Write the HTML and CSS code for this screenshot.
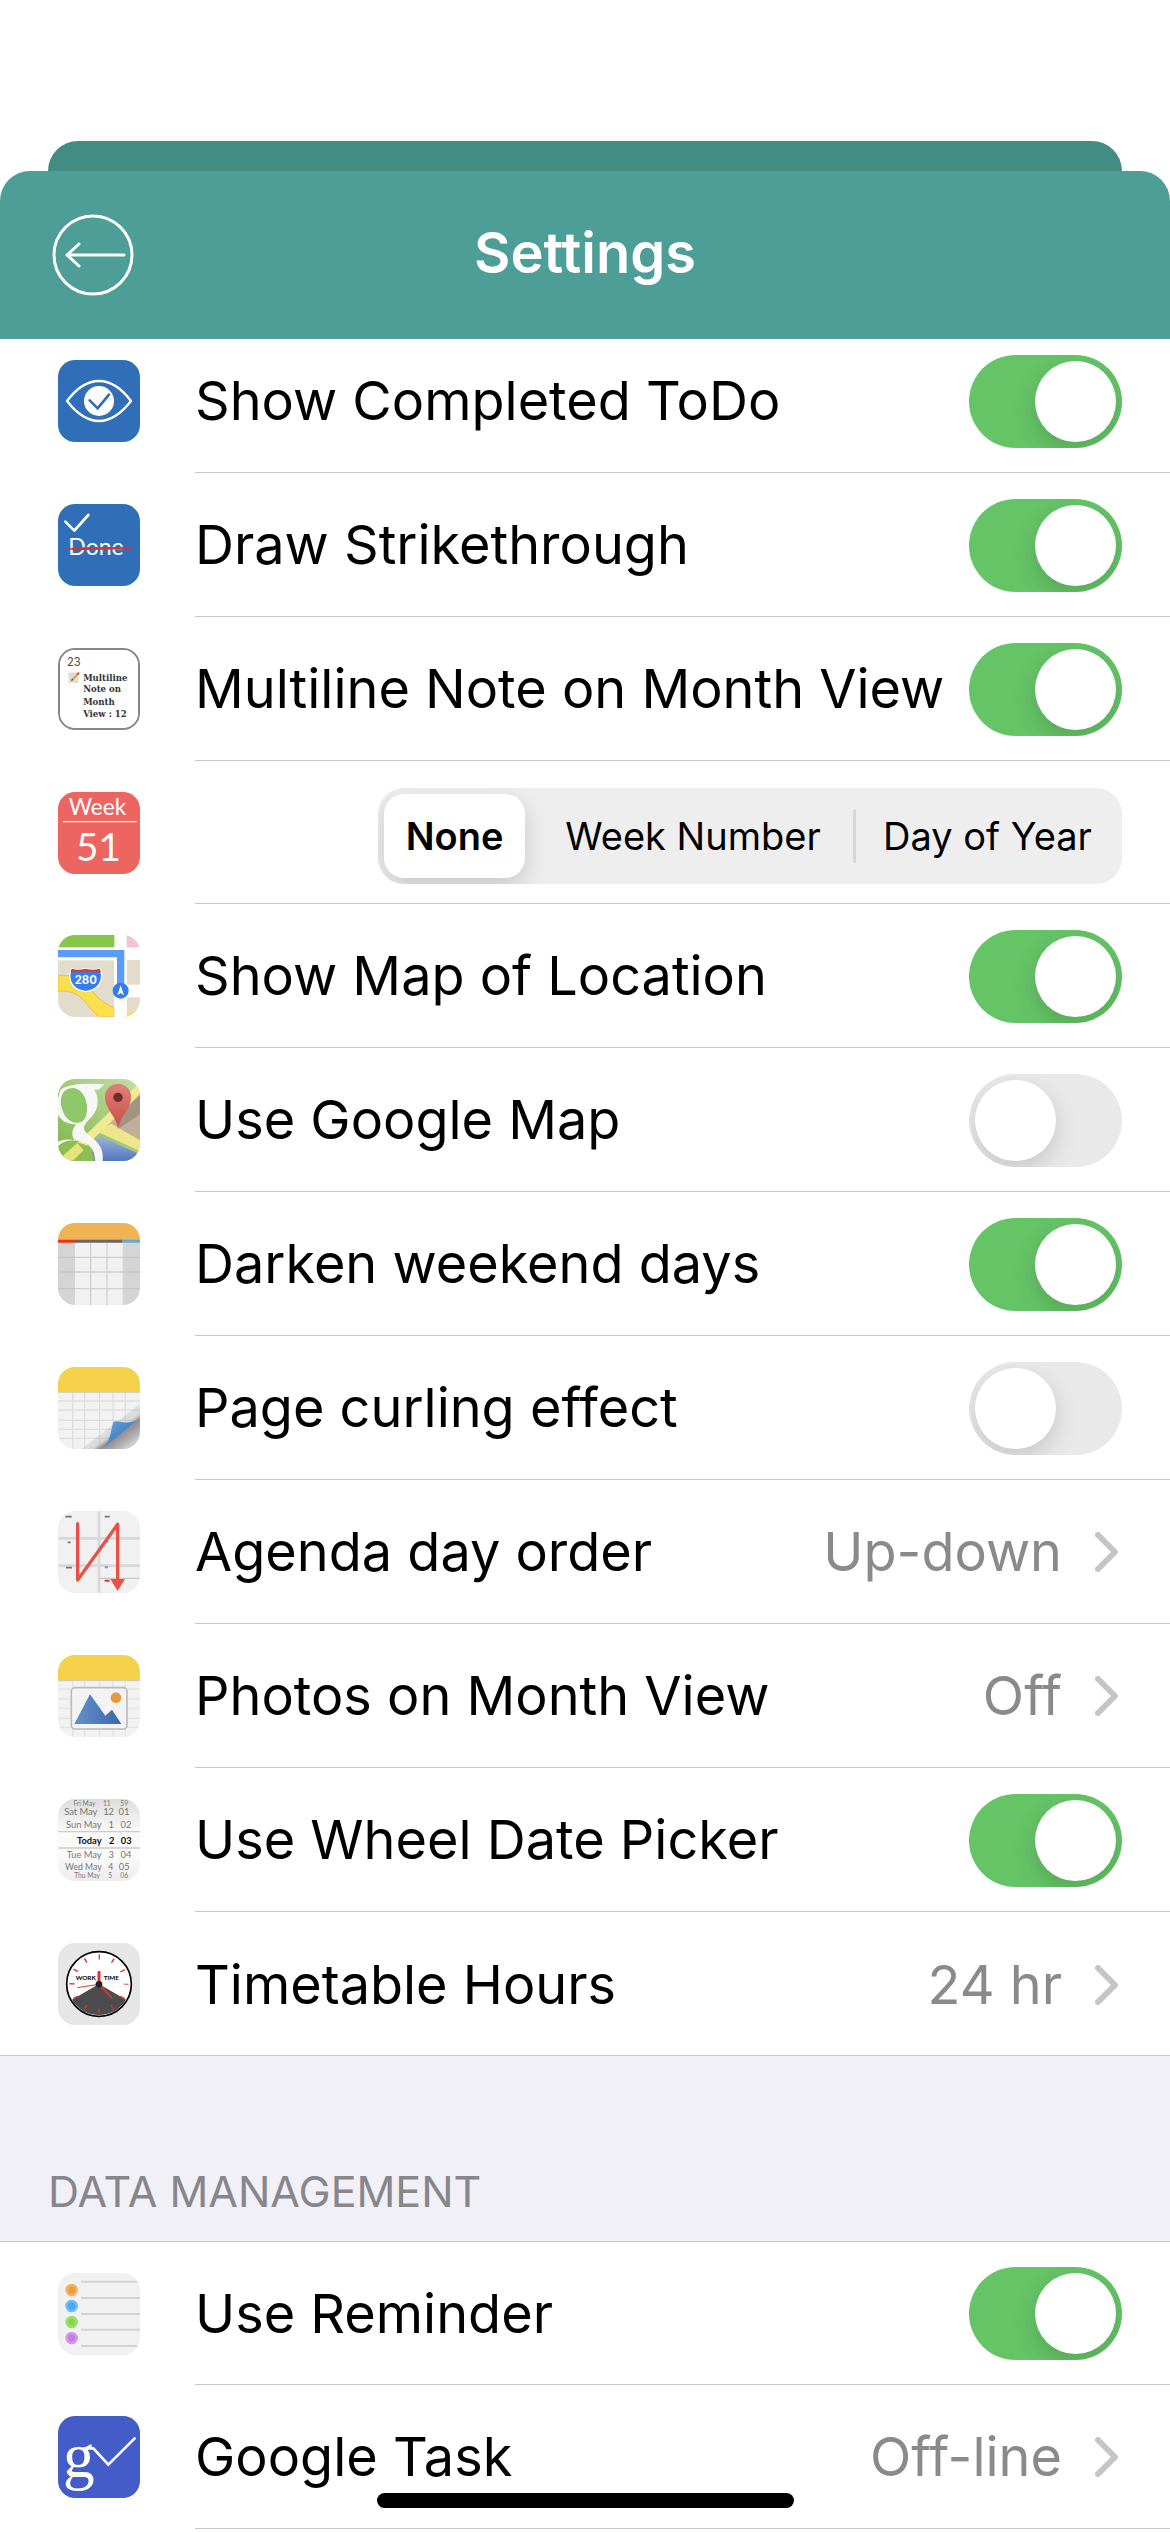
FILE: index.html
```html
<!DOCTYPE html>
<html lang="en">
<head>
<meta charset="utf-8">
<meta name="viewport" content="width=device-width, initial-scale=1">
<title>Settings</title>
<link rel="stylesheet" href="styles.css">
</head>
<body>
<div class="behind"></div>
<main class="sheet">
  <header class="navbar">
    <button class="back" type="button" aria-label="Back">
      <svg viewBox="0 0 82 82" fill="none" stroke="#fff" stroke-width="3" stroke-linecap="round" stroke-linejoin="round"><circle cx="41" cy="41" r="39"/><path d="M72 41H15M27 30L15 41L27 52"/></svg>
    </button>
    <h1 class="title">Settings</h1>
  </header>

  <ul class="list list-first">
    <li class="row">
      <svg class="icon" viewBox="0 0 246 246" aria-hidden="true">
        <rect width="246" height="246" fill="#306fb7"/>
        <path d="M27 123Q72 63 123 63T219 123Q172 183 123 183T27 123Z" fill="none" stroke="#fff" stroke-width="7" stroke-linejoin="round"/>
        <circle cx="123" cy="123" r="45" fill="#fff"/>
        <path d="M95 121L119 145L153 104" fill="none" stroke="#306fb7" stroke-width="8" stroke-linecap="round"/>
      </svg>
      <div class="content"><label class="name" for="completed">Show Completed ToDo</label><input class="switch" type="checkbox" role="switch" id="completed" checked></div>
    </li>
    <li class="row">
      <svg class="icon" viewBox="0 0 246 246" aria-hidden="true">
        <rect width="246" height="246" fill="#306fb7"/>
        <path d="M22 53L49 80L91 33" fill="none" stroke="#fff" stroke-width="8" stroke-linecap="round" stroke-linejoin="round"/>
        <text class="geo" x="31" y="154" font-size="69" fill="#fff">Done</text>
        <path d="M24 134L60 130L150 129L222 130V135L140 137L50 139Z" fill="#d8322f"/>
      </svg>
      <div class="content"><label class="name" for="strike">Draw Strikethrough</label><input class="switch" type="checkbox" role="switch" id="strike" checked></div>
    </li>
    <li class="row">
      <svg class="icon icon-outlined" viewBox="0 0 246 246" aria-hidden="true">
        <rect width="246" height="246" fill="#fff"/>
        <text x="22" y="52" font-size="35" fill="#444">23</text>
        <rect x="27" y="71" width="31" height="33" fill="#ddd"/>
        <path d="M37 95L56 76" stroke="#d9a82b" stroke-width="6"/><path d="M54 78L60 72" stroke="#e05545" stroke-width="7"/><path d="M36 97L40 92" stroke="#444" stroke-width="4"/>
        <g class="slab" font-size="27" fill="#333"><text x="73" y="97">Multiline</text><text x="73" y="133">Note on</text><text x="73" y="173">Month</text><text x="73" y="210">View : 12</text></g>
      </svg>
      <div class="content"><label class="name" for="multiline">Multiline Note on Month View</label><input class="switch" type="checkbox" role="switch" id="multiline" checked></div>
    </li>
    <li class="row row-short">
      <svg class="icon" viewBox="0 0 246 246" aria-hidden="true">
        <rect width="246" height="246" fill="#ed6560"/>
        <g class="geo" fill="#fff"><text x="32" y="68" font-size="68">Week</text><text x="54" y="207" font-size="116">51</text></g>
        <path d="M15 89H236" stroke="#fff" stroke-width="4"/>
      </svg>
      <div class="content content-segmented">
        <fieldset class="segmented" aria-label="Day label">
          <label class="segment segment-none"><input type="radio" name="daylabel" checked><span>None</span></label>
          <label class="segment segment-week"><input type="radio" name="daylabel"><span>Week Number</span></label>
          <label class="segment segment-day"><input type="radio" name="daylabel"><span>Day of Year</span></label>
        </fieldset>
      </div>
    </li>
    <li class="row">
      <svg class="icon" viewBox="0 0 246 246" aria-hidden="true">
        <rect width="246" height="246" fill="#fff"/>
        <rect width="169" height="37" fill="#87c648"/><rect x="206" width="40" height="37" fill="#f2c4d1"/>
        <rect y="76" width="169" height="170" fill="#e1dccb"/><rect x="206" y="75" width="40" height="74" fill="#e1dccb"/><rect x="206" y="187" width="40" height="59" fill="#e1dccb"/>
        <path d="M0 122C40 121 65 124 86 149C110 178 132 205 169 218V246H124C95 221 83 199 62 183C42 169 25 168 0 168Z" fill="#f9e04c" stroke="#edbd49" stroke-width="3"/>
        <path d="M169 76V246H206V76Z" fill="#fff"/>
        <path d="M206 246V236Q225 233 246 225V246Z" fill="#f9e04c"/>
        <path d="M0 56H188V150" fill="none" stroke="#5a9cf8" stroke-width="22"/>
        <path d="M41 101Q60 107 83 101Q106 107 125 101C136 121 135 163 83 170C31 163 30 121 41 101Z" fill="#347df1" stroke="#fff" stroke-width="4"/>
        <path d="M41 101Q60 107 83 101Q106 107 125 101L129 112H37Z" fill="#cc3d3c"/>
        <text class="bold" x="50" y="146" font-size="34" fill="#fff">280</text>
        <circle cx="188" cy="167" r="24" fill="#347df1"/><path d="M188 151L198 181L188 174L178 181Z" fill="#fff"/>
      </svg>
      <div class="content"><label class="name" for="map">Show Map of Location</label><input class="switch" type="checkbox" role="switch" id="map" checked></div>
    </li>
    <li class="row">
      <svg class="icon" viewBox="0 0 246 246" aria-hidden="true">
        <defs>
          <linearGradient id="land" x1="0" y1="1" x2="1" y2="0"><stop offset="0" stop-color="#7fb548"/><stop offset="1" stop-color="#c3dea9"/></linearGradient>
          <linearGradient id="sea" x1="0" y1="0" x2="0" y2="1"><stop offset="0" stop-color="#9db3de"/><stop offset="1" stop-color="#5277bf"/></linearGradient>
          <linearGradient id="pin" x1="0" y1="0" x2="0" y2="1"><stop offset="0" stop-color="#e08178"/><stop offset="1" stop-color="#c74c42"/></linearGradient>
        </defs>
        <rect width="246" height="246" fill="url(#land)"/>
        <path d="M246 38L142 146L246 196Z" fill="#c0ae99"/>
        <path d="M246 48L181 112L181 150L246 106Z" fill="#a29481"/>
        <path d="M121 170L246 226V246H90Z" fill="url(#sea)"/>
        <path d="M20 246L246 28" stroke="#f1ea92" stroke-width="25"/>
        <path d="M118 155L160 134L246 184V216L126 162Z" fill="#eee68b"/>
        <path d="M0 203C29 183 79 184 102 216Q108 229 108 246H43L22 232Z" fill="#8dbd53"/><path d="M43 246L77 214L58 192L10 235Z" fill="#e8e27a"/>
        <path d="M6 34C30 16 66 12 139 16L122 32H108C126 55 122 91 101 113C85 130 75 138 79 153C91 177 141 187 134 246H111C112 203 84 186 46 184C24 184 8 193 0 202V188C17 180 35 180 49 183C37 164 45 149 54 136C34 136 9 127 0 107V60Z" fill="#f7f8f5"/>
        <path d="M45 27C10 28 2 61 14 95C26 130 61 143 80 120C98 92 83 29 45 27Z" fill="#91c76b"/>
        <path d="M180 152C177 111 141 93 141 53A39 39 0 0 1 219 53C219 93 184 111 180 152Z" fill="url(#pin)"/><circle cx="180" cy="55" r="14" fill="#6e2c2b"/>
      </svg>
      <div class="content"><label class="name" for="gmap">Use Google Map</label><input class="switch" type="checkbox" role="switch" id="gmap"></div>
    </li>
    <li class="row">
      <svg class="icon" viewBox="0 0 246 246" aria-hidden="true">
        <rect width="246" height="246" fill="#f1f1f1"/>
        <path d="M0 55H51V246H0ZM194 55H246V246H194Z" fill="#d5d5d5"/>
        <path d="M98 60V246M147 60V246M0 103H246M0 147H246M0 197H246" stroke="#bbb" stroke-opacity=".6" stroke-width="4"/>
        <rect width="246" height="51" fill="#efb254"/>
        <path d="M0 55H51" stroke="#ea3324" stroke-width="9"/><path d="M51 55H194" stroke="#666" stroke-width="9"/><path d="M194 55H246" stroke="#5aabdd" stroke-width="9"/>
      </svg>
      <div class="content"><label class="name" for="darken">Darken weekend days</label><input class="switch" type="checkbox" role="switch" id="darken" checked></div>
    </li>
    <li class="row">
      <svg class="icon" viewBox="0 0 246 246" aria-hidden="true">
        <defs>
          <linearGradient id="shade" gradientUnits="userSpaceOnUse" x1="145" y1="140" x2="215" y2="235"><stop offset="0" stop-color="#888" stop-opacity="0"/><stop offset=".5" stop-color="#888" stop-opacity=".25"/><stop offset=".62" stop-color="#777" stop-opacity=".8"/><stop offset="1" stop-color="#ccc"/></linearGradient>
          <linearGradient id="fold" x1="0" y1="0" x2="1" y2="1"><stop offset="0" stop-color="#72a9db"/><stop offset=".6" stop-color="#3d80c4"/></linearGradient>
        </defs>
        <rect width="246" height="246" fill="#f2f2f2"/>
        <path d="M44 75V246M80 75V246M125 75V246M165 75V246M202 75V246M0 102H246M0 129H246M0 160H246M0 187H246M0 214H246" stroke="#dedede" stroke-width="4"/>
        <path d="M246 110V246H70Z" fill="url(#shade)"/>
        <path d="M136 243C157 224 157 195 166 165Q169 160 195 166Q222 169 243 155Z" fill="url(#fold)"/>
        <rect width="246" height="74" fill="#f6d14a"/><path d="M0 75H246" stroke="#cfc9ae" stroke-width="4"/>
      </svg>
      <div class="content"><label class="name" for="curl">Page curling effect</label><input class="switch" type="checkbox" role="switch" id="curl"></div>
    </li>
    <li>
      <a class="row" href="#agenda">
        <svg class="icon" viewBox="0 0 246 246" aria-hidden="true">
          <rect width="246" height="246" fill="#f1f1f1"/>
          <path d="M123 0V246M0 82H246M0 164H246" stroke="#d8d8d8" stroke-width="8"/><path d="M123 202H246" stroke="#c8c8c8" stroke-width="4"/>
          <path d="M22 17H41M140 17H155M29 94H38M24 170H42M144 92H150" stroke="#777" stroke-width="5"/><path d="M140 169H150" stroke="#58a9d8" stroke-width="6"/><path d="M140 209H155" stroke="#e33" stroke-width="6"/>
          <path d="M59 38V207L179 40V205" fill="none" stroke="#e7514a" stroke-width="10" stroke-linecap="round" stroke-linejoin="round"/><path d="M157 204H201L179 240Z" fill="#e7514a"/>
        </svg>
        <span class="content"><span class="name">Agenda day order</span><span class="value">Up-down</span><svg class="chevron" viewBox="0 0 24 40" aria-hidden="true"><path d="M3 3L20 20L3 37"/></svg></span>
      </a>
    </li>
    <li>
      <a class="row" href="#photos">
        <svg class="icon" viewBox="0 0 246 246" aria-hidden="true">
          <defs><linearGradient id="hill"><stop offset="0" stop-color="#6590c8"/><stop offset="1" stop-color="#3a68ae"/></linearGradient></defs>
          <rect width="246" height="246" fill="#f2f2f2"/>
          <path d="M44 75V246M80 75V246M125 75V246M165 75V246M202 75V246M0 102H246M0 132H246M0 160H246M0 190H246M0 217H246" stroke="#e3e3e3" stroke-width="4"/>
          <rect width="246" height="76" fill="#f6d14a"/><path d="M0 77H246" stroke="#cfc9ae" stroke-width="3"/>
          <rect x="40" y="98" width="167" height="124" rx="11" fill="#f3f3f3" stroke="#bbb" stroke-width="5"/>
          <path d="M49 207L96 118L142 182L162 164L190 207Z" fill="url(#hill)"/><circle cx="174" cy="128" r="16" fill="#e39a45"/>
        </svg>
        <span class="content"><span class="name">Photos on Month View</span><span class="value">Off</span><svg class="chevron" viewBox="0 0 24 40" aria-hidden="true"><path d="M3 3L20 20L3 37"/></svg></span>
      </a>
    </li>
    <li class="row">
      <svg class="icon" viewBox="0 0 246 246" aria-hidden="true">
        <defs><linearGradient id="wheel" x1="0" y1="0" x2="0" y2="1"><stop offset="0" stop-color="#ddd"/><stop offset=".4" stop-color="#fafafa"/><stop offset=".7" stop-color="#fafafa"/><stop offset="1" stop-color="#ececec"/></linearGradient></defs>
        <rect width="246" height="246" fill="url(#wheel)"/>
        <path d="M0 98H246M0 147H246" stroke="#ccc" stroke-width="4"/>
        <g class="geo" font-size="28" fill="#777" text-anchor="end">
          <text font-size="20" x="112" y="21">Fri May</text><text font-size="20" x="158" y="21">11</text><text font-size="20" x="210" y="21">59</text>
          <text x="118" y="47">Sat May</text><text x="168" y="47">12</text><text x="214" y="47">01</text>
          <text x="131" y="87">Sun May</text><text x="168" y="87">1</text><text x="220" y="87">02</text>
          <text x="131" y="178">Tue May</text><text x="168" y="178">3</text><text x="220" y="178">04</text>
          <text font-size="26" x="131" y="214">Wed May</text><text x="166" y="214">4</text><text x="215" y="214">05</text>
          <text font-size="20" x="126" y="238">Thu May</text><text font-size="20" x="162" y="238">5</text><text font-size="20" x="210" y="238">06</text>
        </g>
        <g class="geo bold" font-size="28" fill="#111" text-anchor="end"><text x="131" y="136">Today</text><text x="169" y="136">2</text><text x="221" y="136">03</text></g>
      </svg>
      <div class="content"><label class="name" for="wheelpicker">Use Wheel Date Picker</label><input class="switch" type="checkbox" role="switch" id="wheelpicker" checked></div>
    </li>
    <li>
      <a class="row" href="#hours">
        <svg class="icon" viewBox="0 0 246 246" aria-hidden="true">
          <rect width="246" height="246" fill="#e6e6e6"/>
          <circle cx="123" cy="123" r="96" fill="#fff"/><path d="M123 123L42 170A94 94 0 0 0 204 170Z" fill="#4c4c4c"/>
          <circle cx="123" cy="123" r="81" fill="none" stroke="#d93434" stroke-width="15" pathLength="120" stroke-dasharray="1 9" stroke-dashoffset=".5"/>
          <circle cx="123" cy="123" r="97" fill="none" stroke="#000" stroke-width="5"/>
          <g class="geo bold" font-size="19"><text x="53" y="111">WORK</text><text x="137" y="111">TIME</text></g>
          <path d="M123 123V88" stroke="#d93434" stroke-width="9" stroke-linecap="round"/><path d="M123 123L160 164" stroke="#d93434" stroke-width="6" stroke-linecap="round"/><path d="M123 124L58 134" stroke="#d93434" stroke-width="3"/><circle cx="123" cy="124" r="10" fill="#222"/>
        </svg>
        <span class="content content-last"><span class="name">Timetable Hours</span><span class="value">24 hr</span><svg class="chevron" viewBox="0 0 24 40" aria-hidden="true"><path d="M3 3L20 20L3 37"/></svg></span>
      </a>
    </li>
  </ul>

  <h2 class="section">DATA MANAGEMENT</h2>

  <ul class="list">
    <li class="row row-short">
      <svg class="icon" viewBox="0 0 246 246" aria-hidden="true">
        <rect width="246" height="246" fill="#f1f1f1"/>
        <path d="M69 26H238M69 75H246M69 123H246M69 170H246M69 219H238" stroke="#d3d3d3" stroke-width="6"/>
        <g stroke-width="8"><circle cx="41" cy="51" r="15" fill="#f19c38" stroke="#f2b364"/><circle cx="41" cy="99" r="15" fill="#4ba8f2" stroke="#6fbcf5"/><circle cx="41" cy="147" r="15" fill="#84d850" stroke="#9ae070"/><circle cx="41" cy="195" r="15" fill="#c57be0" stroke="#d39be8"/></g>
      </svg>
      <div class="content"><label class="name" for="reminder">Use Reminder</label><input class="switch" type="checkbox" role="switch" id="reminder" checked></div>
    </li>
    <li>
      <a class="row" href="#task">
        <svg class="icon" viewBox="0 0 246 246" aria-hidden="true">
          <rect width="246" height="246" fill="#435cc8"/>
          <text class="serif" x="15" y="182" font-size="190" fill="#fff">g</text>
          <path d="M80 97H106L151 146L230 67" fill="none" stroke="#fff" stroke-width="8" stroke-linecap="round"/>
        </svg>
        <span class="content"><span class="name">Google Task</span><span class="value">Off-line</span><svg class="chevron" viewBox="0 0 24 40" aria-hidden="true"><path d="M3 3L20 20L3 37"/></svg></span>
      </a>
    </li>
  </ul>
</main>
<div class="home-indicator"></div>
</body>
</html>
```

FILE: styles.css
```css
* { box-sizing: border-box; }

body {
  margin: 0;
  padding-top: 141px;
  min-height: 100vh;
  position: relative;
  overflow-x: hidden;
  background: #fff;
  color: #000;
  font-family: Inter, "Liberation Sans", sans-serif;
  font-size: 54px;
}

h1, h2, ul, fieldset { margin: 0; padding: 0; border: 0; }
ul { list-style: none; }
a { color: inherit; text-decoration: none; }

.behind {
  height: 30px;
  margin: 0 48px;
  border-radius: 30px 30px 0 0;
  background: #438c82;
}

.navbar {
  position: relative;
  z-index: 1;
  display: grid;
  grid-template-columns: 82px 1fr 82px;
  align-items: center;
  height: 168px;
  padding: 0 52px;
  border-radius: 30px 30px 0 0;
  background: #4c9e96;
  color: #fff;
}

.back {
  width: 82px;
  height: 82px;
  padding: 0;
  border: 0;
  background: none;
}
.back svg { display: block; }

.title {
  padding-bottom: 4px;
  text-align: center;
  font-size: 56px;
  font-weight: 600;
  line-height: 64px;
}

.list-first { margin-top: -10px; }

.row {
  display: flex;
  align-items: center;
  gap: 55px;
  height: 144px;
  padding-left: 58px;
}
.row-short { height: 143px; }

.icon {
  flex: none;
  width: 82px;
  height: 82px;
  border-radius: 17px;
  font-family: Inter, sans-serif;
}
.icon-outlined { border: 2px solid #888; }
.icon .geo { font-family: Lato, sans-serif; }
.icon .bold { font-weight: 700; }
.icon .slab { font-family: "DejaVu Serif", serif; font-weight: 700; }
.icon .serif { font-family: "Liberation Serif", serif; }

.content {
  flex: 1;
  display: flex;
  align-items: center;
  align-self: stretch;
  padding-top: 1px;
  padding-right: 48px;
  border-bottom: 1px solid #c6c6c8;
}
.content-last { border-bottom: 0; }
.content-segmented { padding-top: 8px; }

.name {
  flex: 1;
  line-height: 64px;
  white-space: nowrap;
}

.value { color: #8a8a8d; line-height: 64px; }

.chevron {
  width: 24px;
  height: 40px;
  margin: 0 3px 0 33px;
  fill: none;
  stroke: #c5c5c7;
  stroke-width: 6;
  stroke-linecap: round;
  stroke-linejoin: round;
}

.switch {
  appearance: none;
  flex: none;
  width: 153px;
  height: 93px;
  margin: 0;
  padding: 6px;
  border-radius: 47px;
  overflow: hidden;
  background: #e9e9e9;
}
.switch::before {
  content: "";
  display: block;
  width: 81px;
  height: 81px;
  border-radius: 50%;
  background: #fff;
  box-shadow: 0 9px 24px rgba(0, 0, 0, .15);
}
.switch:checked { background: #65c466; }
.switch:checked::before { margin-left: auto; }

.segmented {
  display: flex;
  width: 744px;
  height: 96px;
  margin-left: auto;
  padding: 6px 0 6px 6px;
  border-radius: 26px;
  overflow: hidden;
  background: #eee;
  font-size: 38px;
}
.segment {
  position: relative;
  display: flex;
  align-items: center;
  justify-content: center;
}
.segment input {
  position: absolute;
  inset: 0;
  margin: 0;
  appearance: none;
}
.segment span { position: relative; white-space: nowrap; }
.segment-none { width: 141px; }
.segment-week { width: 320px; margin-left: 8px; }
.segment-day { flex: 1; }
.segment-day::before {
  content: "";
  position: absolute;
  left: 0;
  top: 15px;
  bottom: 15px;
  width: 3px;
  border-radius: 2px;
  background: #d6d6d8;
}
.segment input:checked {
  border-radius: 20px;
  background: #fff;
  box-shadow: 0 9px 24px rgba(0, 0, 0, .16);
}
.segment input:checked + span { font-weight: 600; }

.section {
  display: flex;
  align-items: flex-end;
  height: 187px;
  margin-top: -1px;
  padding: 0 48px 26px;
  border: solid #c6c6c8;
  border-width: 1px 0;
  background: #f1f0f6;
  color: #86868b;
  font-size: 43px;
  font-weight: 400;
  line-height: 48px;
}

.home-indicator {
  position: absolute;
  left: 50%;
  bottom: 24px;
  width: 417px;
  height: 15px;
  margin-left: -208px;
  border-radius: 8px;
  background: #000;
}
```
